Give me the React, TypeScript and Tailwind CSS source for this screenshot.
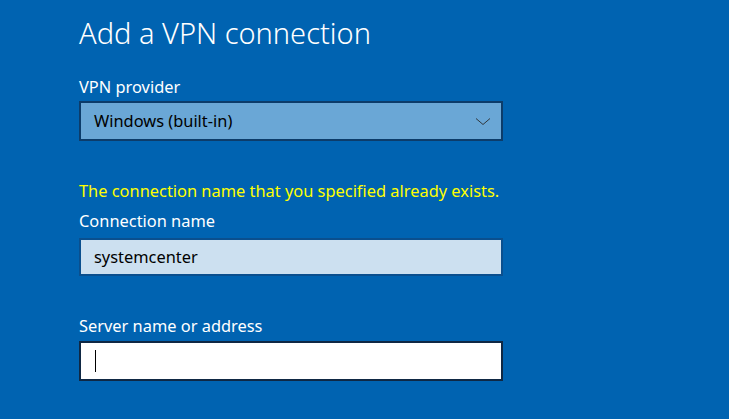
const App = () => {
  return (
    <div
      className="w-[729px] h-[419px] bg-[#0063b1] overflow-hidden pl-[79px] text-white"
      style={{ fontFamily: '"Segoe UI", "Noto Sans", sans-serif' }}
    >
      <h1 className="pt-[13px] text-[29px] font-light leading-[40px]">Add a VPN connection</h1>

      <p className="mt-[24px] text-[16.4px] leading-[20px]">VPN provider</p>
      <div className="mt-[4px] w-[424px] h-[40px] border-2 border-[#0c3c6a] bg-[#6aa7d6] flex items-center justify-between pl-[13px] pr-[9px]">
        <span className="text-[16.4px] text-black">Windows (built-in)</span>
        <svg width="16" height="9" viewBox="0 0 16 9" className="mr-[1px]">
          <path d="M1 1.5 L8 7.5 L15 1.5" fill="none" stroke="#2a2a2a" strokeWidth="0.9" />
        </svg>
      </div>

      <p className="mt-[40px] text-[16.4px] leading-[20px] text-[#ffff00]">
        The connection name that you specified already exists.
      </p>
      <p className="mt-[10px] text-[16.4px] leading-[20px]">Connection name</p>
      <div className="mt-[7px] w-[424px] h-[38px] border-2 border-[#0a4f8e] bg-[#cce0f0] flex items-center pl-[13px]">
        <span className="text-[16.4px] text-black">systemcenter</span>
      </div>

      <p className="mt-[40px] text-[16.4px] leading-[20px]">Server name or address</p>
      <div className="mt-[5px] w-[424px] h-[40px] border-2 border-[#0f2844] bg-white flex items-center pl-[14px]">
        <div className="w-px h-[22px] bg-black" />
      </div>
    </div>
  );
};

export default App;
